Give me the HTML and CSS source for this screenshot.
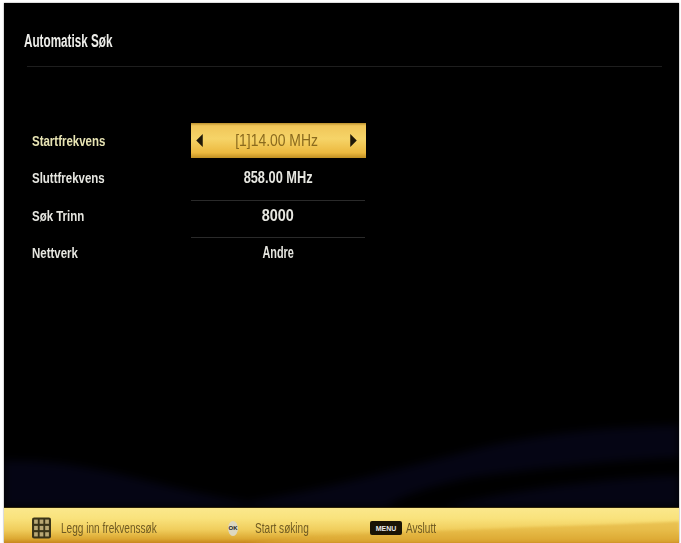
FILE: index.html
```html
<!DOCTYPE html>
<html lang="no">
<head>
<meta charset="utf-8">
<title>Automatisk Søk</title>
<link rel="stylesheet" href="styles.css">
</head>
<body>
<div class="screen">
  <main class="content">
    <h1 class="title"><span class="narrow">Automatisk Søk</span></h1>
    <div class="rule"></div>
    <div class="settings">
      <div class="row">
        <span class="label label-active"><span class="narrow">Startfrekvens</span></span>
        <div class="value value-active">
          <svg class="arrow" viewBox="0 0 6 12"><path d="M6 0V12L0 6Z"/></svg>
          <span class="value-text">[1]14.00 MHz</span>
          <svg class="arrow" viewBox="0 0 6 12"><path d="M0 0V12L6 6Z"/></svg>
        </div>
      </div>
      <div class="row">
        <span class="label"><span class="narrow">Sluttfrekvens</span></span>
        <div class="value"><span class="value-text">858.00 MHz</span></div>
      </div>
      <div class="row">
        <span class="label"><span class="narrow">Søk Trinn</span></span>
        <div class="value value-lined"><span class="value-number">8000</span></div>
      </div>
      <div class="row">
        <span class="label"><span class="narrow">Nettverk</span></span>
        <div class="value value-lined"><span class="value-word">Andre</span></div>
      </div>
    </div>
  </main>
  <svg class="waves" viewBox="0 0 675 90" preserveAspectRatio="none">
    <path class="wave" d="M0 44C60 42 110 56 160 68C210 80 250 88 300 92H0Z"/>
    <path class="wave" d="M200 92C290 80 380 56 480 30C550 14 610 10 680 8V40C600 44 530 52 470 60C420 70 390 82 380 92Z"/>
    <path class="wave" d="M430 92C500 74 590 62 680 58V92Z"/>
  </svg>
  <footer class="footer">
    <svg class="footer-sheen" viewBox="0 0 675 36" preserveAspectRatio="none">
      <path d="M240 36C400 22 560 20 675 14V36Z"/>
    </svg>
    <div class="hint hint-grid">
      <svg class="grid-icon" viewBox="0 0 18 20">
        <rect width="18" height="20" rx="2" fill="#3a3418"/>
        <g fill="#b9a874">
          <rect x="2" y="2" width="3.5" height="4"/><rect x="7.25" y="2" width="3.5" height="4"/><rect x="12.5" y="2" width="3.5" height="4"/>
          <rect x="2" y="8" width="3.5" height="4"/><rect x="7.25" y="8" width="3.5" height="4"/><rect x="12.5" y="8" width="3.5" height="4"/>
          <rect x="2" y="14" width="3.5" height="4"/><rect x="7.25" y="14" width="3.5" height="4"/><rect x="12.5" y="14" width="3.5" height="4"/>
        </g>
      </svg>
      <span class="narrow-foot">Legg inn frekvenssøk</span>
    </div>
    <div class="hint hint-ok">
      <span class="ok-icon">OK</span>
      <span class="narrow-foot">Start søking</span>
    </div>
    <div class="hint hint-menu">
      <span class="menu-icon">MENU</span>
      <span class="narrow-foot">Avslutt</span>
    </div>
  </footer>
</div>
</body>
</html>
```
FILE: styles.css
```css
html, body {
  margin: 0;
  height: 100%;
  background: #fff;
  overflow: hidden;
}
body {
  padding: 3px 2px 0 4px;
  box-sizing: border-box;
  font-family: "Liberation Sans", sans-serif;
}
.screen {
  position: relative;
  height: 540px;
  background: #000;
  display: flex;
  flex-direction: column;
  box-shadow: 0 0 1.5px #777;
  filter: blur(0.7px);
  overflow: hidden;
}
.content {
  flex: 1;
  padding: 28px 17px 0 20px;
  position: relative;
  z-index: 1;
}
.title {
  margin: 0;
  font-size: 18px;
  line-height: 20px;
  font-weight: 700;
  color: #eeeeea;
}
.title .narrow {
  transform: scaleX(0.65);
}
.narrow,
.narrow-foot,
.value-text,
.value-word,
.value-number {
  display: inline-block;
  white-space: nowrap;
}
.narrow,
.narrow-foot {
  transform-origin: left center;
}
.rule {
  height: 1px;
  margin: 15px 0 0 3px;
  background: #1e1e1e;
}
.settings {
  margin-top: 56px;
  display: flex;
  flex-direction: column;
}
.row {
  display: flex;
  align-items: stretch;
  height: 37.5px;
}
.row:first-child {
  height: 35px;
  margin-bottom: 1.5px;
}
.label {
  width: 167px;
  padding-left: 8px;
  box-sizing: border-box;
  display: flex;
  align-items: center;
  font-size: 15.5px;
  font-weight: 700;
  color: #e6e6e0;
}
.label .narrow {
  transform: scaleX(0.74);
}
.label-active {
  color: #e8e4b4;
}
.value {
  width: 174px;
  display: flex;
  align-items: center;
  justify-content: center;
  box-sizing: border-box;
  font-size: 16px;
  font-weight: 700;
  color: #e6e6e0;
}
.value-text {
  transform: scaleX(0.8);
}
.value-word {
  transform: scaleX(0.68);
}
.value-number {
  transform: scaleX(0.9);
}
.value-lined {
  margin-top: 2.5px;
  padding-bottom: 4px;
  border-top: 1px solid #2a2a2a;
}
.value-active {
  width: 175px;
  justify-content: space-between;
  padding: 0 9px 0 5px;
  background: linear-gradient(#b98f2c 0, #f0c659 8%, #f6d468 45%, #ecb93f 85%, #c08f22 100%);
  color: #8a6a1e;
  font-weight: 400;
}
.value-active .value-text {
  transform: scaleX(0.87);
}
.arrow {
  width: 7px;
  height: 13px;
  fill: #1e1708;
}
.waves {
  position: absolute;
  left: 0;
  right: 0;
  bottom: 36px;
  width: 100%;
  height: 90px;
  filter: blur(4px);
}
.wave {
  fill: #050514;
}
.footer {
  position: relative;
  height: 36px;
  flex: none;
  display: flex;
  align-items: center;
  padding: 5px 0 0 28px;
  box-sizing: border-box;
  background: linear-gradient(#fbe88c 0, #f9e27c 30%, #f0cd5c 62%, #dca832 88%, #c8861e 100%);
  border-top: 1px solid #2c2208;
  color: #6f5a22;
  font-size: 14px;
}
.footer-sheen {
  position: absolute;
  inset: 0;
  width: 100%;
  height: 100%;
  filter: blur(1px);
}
.footer-sheen path {
  fill: #e0ae3a;
  opacity: 0.55;
}
.hint {
  position: relative;
  display: flex;
  align-items: center;
}
.narrow-foot {
  transform: scaleX(0.72);
}
.hint-grid {
  gap: 10px;
  width: 196px;
}
.grid-icon {
  width: 19px;
  height: 22px;
}
.hint-ok {
  gap: 17px;
  width: 142px;
}
.ok-icon {
  width: 10px;
  height: 15px;
  border-radius: 50%;
  background: #ddd8c0;
  color: #222;
  font-size: 6px;
  font-weight: 700;
  display: flex;
  align-items: center;
  justify-content: center;
  overflow: hidden;
}
.hint-menu {
  gap: 4px;
}
.menu-icon {
  width: 32px;
  height: 14px;
  border-radius: 2px;
  background: #1a1405;
  color: #e8e8e8;
  font-size: 7px;
  font-weight: 700;
  display: flex;
  align-items: center;
  justify-content: center;
}
```
